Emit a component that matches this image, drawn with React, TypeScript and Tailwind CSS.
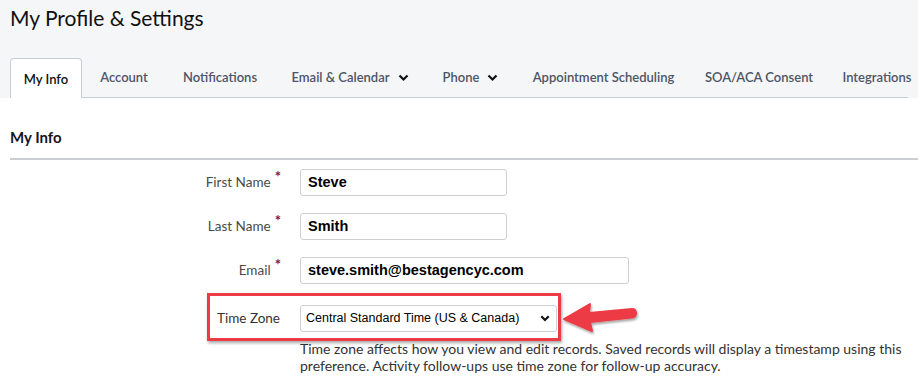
import React from "react";

const tabs = [
  { label: "My Info", w: "w-[72px]", active: true },
  { label: "Account", w: "w-[84px]" },
  { label: "Notifications", w: "w-[108px]" },
  { label: "Email & Calendar", w: "w-[152px]", caret: true },
  { label: "Phone", w: "w-[89px]", caret: true },
  { label: "Appointment Scheduling", w: "w-[177px]" },
  { label: "SOA/ACA Consent", w: "w-[134px]" },
  { label: "Integrations", w: "w-[102px]" },
];

function Caret() {
  return (
    <svg width="11" height="8" viewBox="0 0 11 8" className="ml-[8px] shrink-0">
      <path d="M1.5 1.5 L5.5 5.5 L9.5 1.5" fill="none" stroke="#111" strokeWidth="2.2" />
    </svg>
  );
}

function Field({ label, value, width, required }: { label: string; value: string; width: string; required?: boolean }) {
  return (
    <div className="flex items-center h-[27px]">
      <div className="w-[290px] pr-[19px] flex justify-end items-start text-[13.5px] text-[#4a4a4a]">
        <span>{label}</span>
        {required && <span className="ml-[4px] text-[15px] font-bold leading-none text-[#8b1414] -mt-[3px]">*</span>}
      </div>
      <div
        className={`${width} h-[27px] border border-[#cfcfcf] rounded-[3px] bg-white flex items-center pl-[7px] text-[14.5px] font-bold text-black`}
        style={{ fontFamily: '"Liberation Sans", Arial, sans-serif' }}
      >
        {value}
      </div>
    </div>
  );
}

export default function App() {
  return (
    <div className="relative w-[918px] h-[384px] overflow-hidden bg-white" style={{ fontFamily: 'Lato, "Noto Sans", sans-serif' }}>
      {/* page header + tabs */}
      <div className="bg-[#f5f6f8] px-[10px]">
        <h1 className="pt-[3px] text-[21px] leading-[30px] text-[#111]">My Profile & Settings</h1>
        <div className="mt-[25px] flex items-end h-[40px] border-b border-[#c8ccd3]">
          {tabs.map((t) =>
            t.active ? (
              <div
                key={t.label}
                className={`${t.w} shrink-0 h-[40px] -mb-px pt-[2px] bg-white border border-b-0 border-[#c8ccd3] rounded-t-[4px] flex items-center justify-center text-[13px] font-semibold text-[#111]`}
              >
                {t.label}
              </div>
            ) : (
              <div
                key={t.label}
                className={`${t.w} shrink-0 h-[40px] pt-[2px] flex items-center justify-center whitespace-nowrap text-[13px] font-semibold text-[#4d5566]`}
              >
                {t.label}
                {t.caret && <Caret />}
              </div>
            )
          )}
        </div>
      </div>

      {/* section */}
      <div className="pl-[10px]">
        <h2 className="pt-[29px] text-[15px] leading-[20px] font-bold text-[#16161d]">My Info</h2>
        <div className="mt-[11px] border-b-2 border-[#cbced4]" />

        <div className="mt-[9px] flex flex-col gap-[17px]">
          <Field label="First Name" value="Steve" width="w-[207px]" required />
          <Field label="Last Name" value="Smith" width="w-[207px]" required />
          <Field label="Email" value="steve.smith@bestagencyc.com" width="w-[329px]" required />
        </div>

        <div className="mt-[21px] flex items-center h-[27px]">
          <div className="w-[290px] pr-[20px] flex justify-end text-[13.5px] text-[#333]">Time Zone</div>
          <div
            className="w-[257px] h-[27px] border border-[#cfcfcf] rounded-[3px] bg-white flex items-center justify-between pl-[5px] pr-[6px] whitespace-nowrap text-[12.5px] text-black"
            style={{ fontFamily: '"Liberation Sans", Arial, sans-serif' }}
          >
            <span>Central Standard Time (US & Canada)</span>
            <svg width="10" height="7" viewBox="0 0 10 7" className="shrink-0">
              <path d="M1.3 1.3 L5 5 L8.7 1.3" fill="none" stroke="#111" strokeWidth="2.2" />
            </svg>
          </div>
        </div>

        <p className="mt-[8px] ml-[290px] whitespace-nowrap text-[14px] leading-[17px] text-[#333]">
          Time zone affects how you view and edit records. Saved records will display a timestamp using this
          <br />
          preference. Activity follow-ups use time zone for follow-up accuracy.
        </p>
      </div>

      {/* annotation: red box */}
      <div className="absolute left-[207px] top-[293px] w-[354px] h-[48px] border-[3px] border-[#ec3b45] shadow-[1px_2px_3px_rgba(0,0,0,0.35)] pointer-events-none" />

      {/* annotation: arrow */}
      <svg className="absolute left-[558px] top-[298px]" width="84" height="40" viewBox="0 0 84 40">
        <defs>
          <filter id="sh" x="-20%" y="-30%" width="140%" height="160%">
            <feDropShadow dx="1" dy="2" stdDeviation="1.2" floodColor="#000" floodOpacity="0.35" />
          </filter>
        </defs>
        <g filter="url(#sh)">
          <path
            d="M6 21 L32 6 L31 15 L74 11 Q78 11 78 15 Q78 19 74 19.5 L32 24 L34 33 Z"
            fill="#ec3b45"
            stroke="#ec3b45"
            strokeWidth="2"
            strokeLinejoin="round"
          />
        </g>
      </svg>
    </div>
  );
}
